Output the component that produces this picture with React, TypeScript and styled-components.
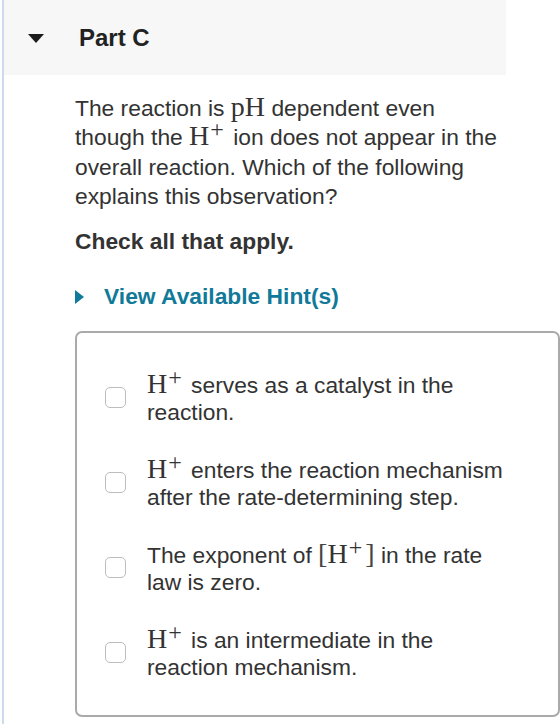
import React from 'react'
import styled, { createGlobalStyle } from 'styled-components'

const GlobalStyle = createGlobalStyle`
  html, body {
    margin: 0;
    padding: 0;
    background: #fff;
  }
  body {
    font-family: "Liberation Sans", Arial, sans-serif;
    color: #333;
  }
`

type Option = {
  id: string;
  content: React.ReactNode;
}

const Page = styled.div`
  margin-left: 2px;
  border-left: 2px solid #c9dbec;
  min-height: 724px;
  box-sizing: border-box;
`

const PartHeader = styled.div`
  display: flex;
  align-items: center;
  width: 502px;
  height: 75px;
  background: #f7f7f7;
  box-sizing: border-box;
  padding-left: 24px;
`

const DownCaret = styled.span`
  width: 0;
  height: 0;
  border-left: 8px solid transparent;
  border-right: 8px solid transparent;
  border-top: 9px solid #1c1c1c;
  margin-right: 35px;
  margin-top: 1px;
`

const PartTitle = styled.h2`
  margin: 0;
  font-size: 24px;
  font-weight: bold;
  color: #222;
`

const Body = styled.div`
  padding: 19px 0 0 71px;
`

const Prompt = styled.p`
  margin: 0;
  width: 430px;
  font-size: 22.8px;
  line-height: 29.3px;
  color: #333;
`

const Instruction = styled.p`
  margin: 16px 0 0;
  font-size: 22.8px;
  font-weight: bold;
  line-height: 29px;
  color: #333;
`

const HintToggle = styled.button`
  display: flex;
  align-items: center;
  margin: 26px 0 0;
  padding: 0;
  border: none;
  background: none;
  font-family: inherit;
  font-size: 22.8px;
  line-height: 29px;
  font-weight: bold;
  color: #127a99;
  cursor: pointer;
`

const RightCaret = styled.span`
  width: 0;
  height: 0;
  border-top: 7px solid transparent;
  border-bottom: 7px solid transparent;
  border-left: 9px solid #127a99;
  margin-right: 20px;
`

const ChoiceBox = styled.div`
  margin-top: 20px;
  width: 485px;
  box-sizing: border-box;
  border: 2px solid #aaa;
  border-radius: 7px;
  padding: 39px 20px 34px 28px;
  display: flex;
  flex-direction: column;
  gap: 31px;
`

const ChoiceRow = styled.label`
  display: flex;
  align-items: center;
  cursor: pointer;
`

const Box = styled.span`
  flex: none;
  width: 19px;
  height: 19px;
  border: 1px solid #bdbdbd;
  border-radius: 5px;
  background: #fff;
  margin-right: 21px;
  margin-bottom: 4px;
`

const ChoiceText = styled.span`
  max-width: 366px;
  font-size: 22.8px;
  line-height: 27px;
  color: #333;
`

const Mathy = styled.span`
  font-family: "Liberation Serif", "Times New Roman", serif;
  font-size: 28px;
  line-height: 0;
  color: #333;
  sup {
    font-size: 24px;
    line-height: 0;
    vertical-align: 8px;
    margin-left: 1px;
    margin-right: 3px;
  }
`

const Bracket = styled.span`
  font-weight: 300;
  color: #444;
`

const HPlus = () => (
  <Mathy>
    H<sup>+</sup>
  </Mathy>
)

const options: Option[] = [
  { id: 'a', content: <><HPlus /> serves as a catalyst in the reaction.</> },
  { id: 'b', content: <><HPlus /> enters the reaction mechanism after the rate-determining step.</> },
  {
    id: 'c',
    content: (
      <>
        The exponent of{' '}
        <Mathy>
          <Bracket>[</Bracket>H<sup>+</sup><Bracket>]</Bracket>
        </Mathy>{' '}
        in the rate law is zero.
      </>
    ),
  },
  { id: 'd', content: <><HPlus /> is an intermediate in the reaction mechanism.</> },
]

const App = () => {
  return (
    <Page>
      <GlobalStyle />
      <PartHeader>
        <DownCaret />
        <PartTitle>Part C</PartTitle>
      </PartHeader>
      <Body>
        <Prompt>
          The reaction is <Mathy>pH</Mathy> dependent even though the <HPlus /> ion does not
          appear in the overall reaction. Which of the following explains this observation?
        </Prompt>
        <Instruction>Check all that apply.</Instruction>
        <HintToggle>
          <RightCaret />
          View Available Hint(s)
        </HintToggle>
        <ChoiceBox>
          {options.map(option => (
            <ChoiceRow key={option.id}>
              <Box />
              <ChoiceText>{option.content}</ChoiceText>
            </ChoiceRow>
          ))}
        </ChoiceBox>
      </Body>
    </Page>
  )
}

export default App
